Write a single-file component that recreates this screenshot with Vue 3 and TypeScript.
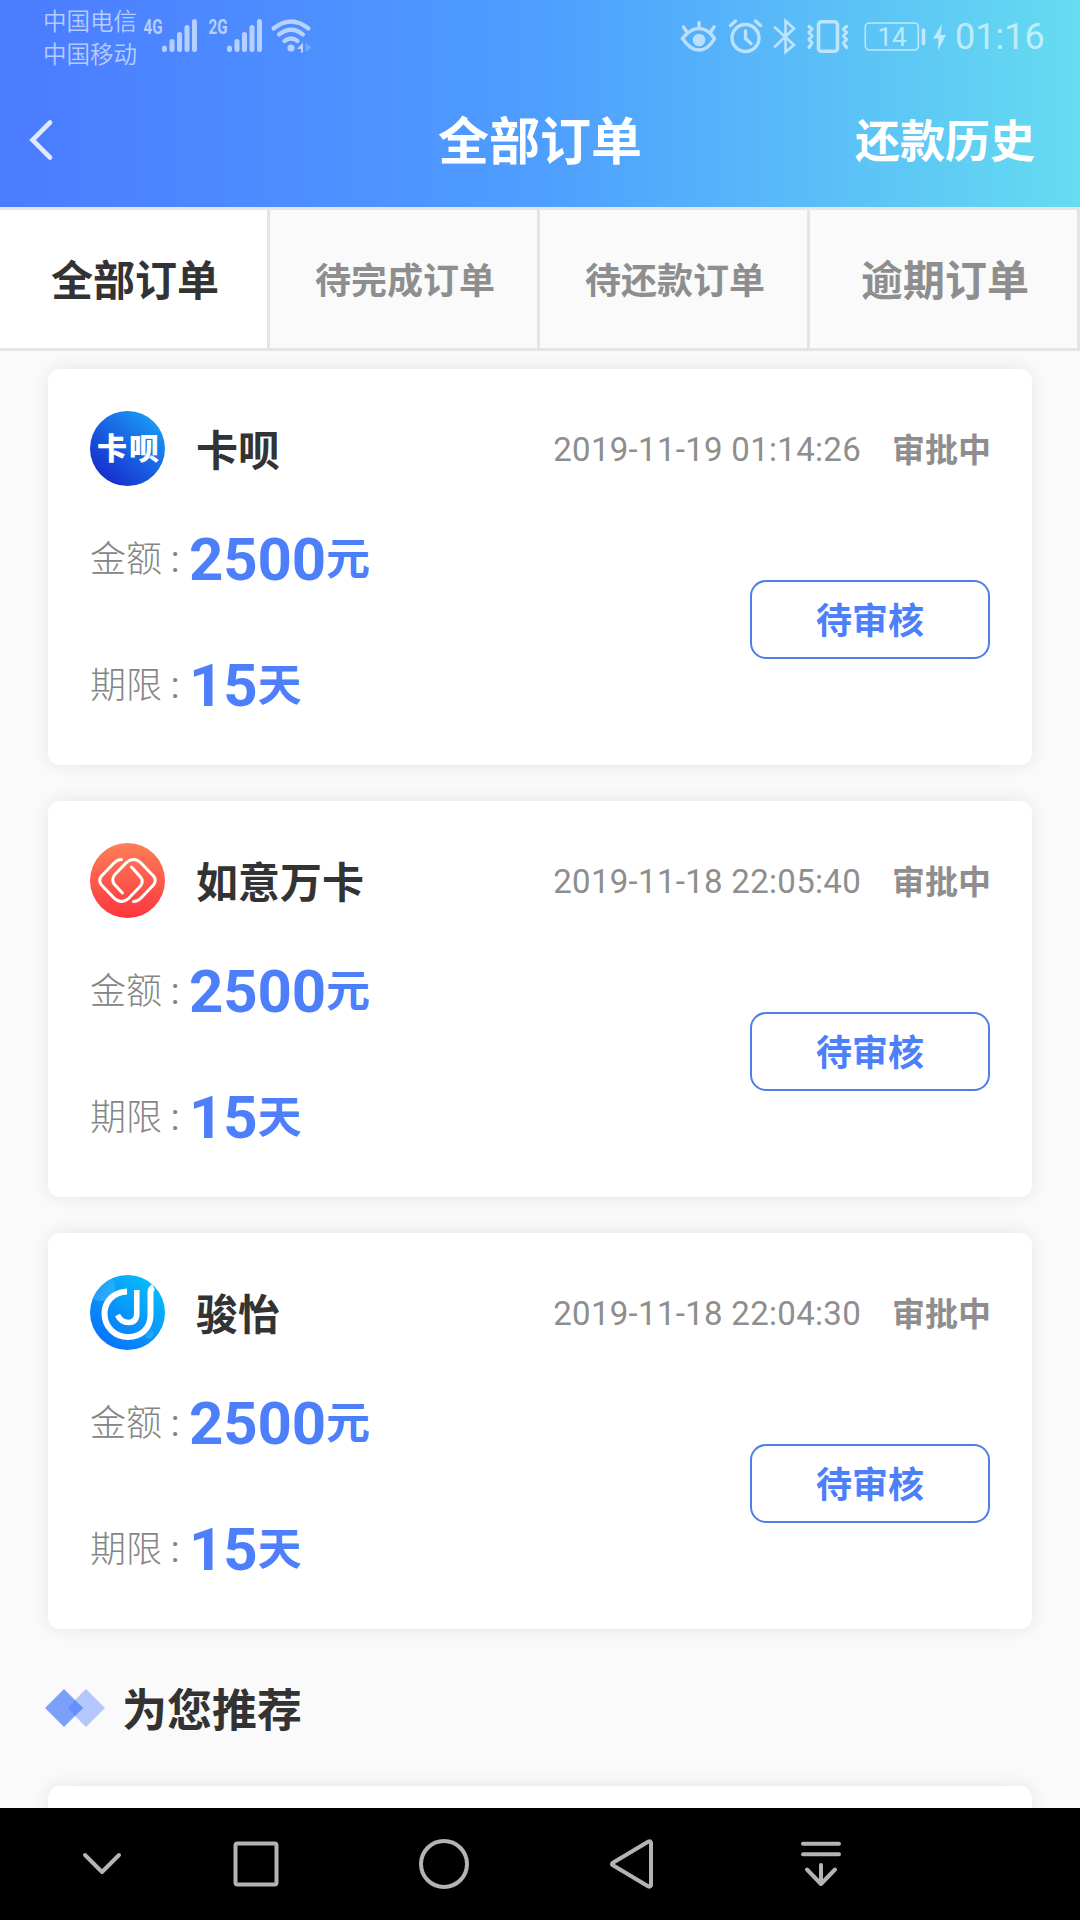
<script setup lang="ts">
interface Order {
  name: string
  logo: 'kabei' | 'ruyi' | 'junyi'
  time: string
  amount: number
  days: number
}

const tabs = [
  { label: '全部订单', active: true, small: false },
  { label: '待完成订单', active: false, small: true },
  { label: '待还款订单', active: false, small: true },
  { label: '逾期订单', active: false, small: false },
]

const orders: Order[] = [
  { name: '卡呗', logo: 'kabei', time: '2019-11-19 01:14:26', amount: 2500, days: 15 },
  { name: '如意万卡', logo: 'ruyi', time: '2019-11-18 22:05:40', amount: 2500, days: 15 },
  { name: '骏怡', logo: 'junyi', time: '2019-11-18 22:04:30', amount: 2500, days: 15 },
]

const networks = ['4G', '2G']
</script>

<template>
  <div class="screen">
    <header class="header">
      <div class="status-bar">
        <div class="carriers">
          <span>中国电信</span>
          <span>中国移动</span>
        </div>
        <svg v-for="net in networks" :key="net" class="signal" width="65" height="72" viewBox="143 0 65 72">
          <text x="143.6" y="34" textLength="19" lengthAdjust="spacingAndGlyphs">{{ net }}</text>
          <g stroke-width="5" stroke-linecap="round">
            <path d="M164.5 48v1.5M172 41.5v8M179.5 34.500v15M187 27.500v22M194.500 21.500v28" />
          </g>
        </svg>
        <svg class="wifi" width="44" height="72" viewBox="269 0 44 72">
          <g fill="none" stroke-width="4.200" stroke-linecap="round">
            <path d="M273.500 28.500Q291 14.500 308.500 28.500M279 34.500Q291 25 303 34.500M284.500 41Q291 36 297.500 41" />
          </g>
          <circle class="solid" cx="291" cy="48" r="3.600" />
          <path class="solid" d="M297 49l6-6.500v10h-2v-3.500z" />
          <path class="faint" d="M305.500 43v9l6-4.500z" />
        </svg>
        <div class="status-right">
          <svg width="40" height="72" viewBox="679 0 40 72">
            <g fill="none" stroke-width="3.400" stroke-linecap="round">
              <path d="M682.500 38.500Q690 28.500 699 28.500T714.500 38.500Q708 50 699 50T682.500 38.500ZM699 22.500v6M683.500 27l3.500 5M714 27l-3.500 5" />
            </g>
            <circle class="solid" cx="699" cy="40" r="6.300" />
          </svg>
          <svg width="52" height="72" viewBox="719 0 52 72">
            <g fill="none" stroke-width="3.400" stroke-linecap="round" stroke-linejoin="round">
              <circle cx="745.500" cy="38" r="13.500" />
              <path d="M730.500 25.500l5-4.500M760.500 25.500l-5-4.500M745.500 31v7.500l5.500 5" />
            </g>
          </svg>
          <svg width="30" height="72" viewBox="771 0 30 72">
            <path fill="none" stroke-width="2.600" stroke-linecap="round" d="M775 27.500l19 17.500-8.500 7v-31l8.500 7.500L775 46.500" />
          </svg>
          <svg width="56" height="72" viewBox="801 0 56 72">
            <g fill="none" stroke-linecap="round" stroke-linejoin="round">
              <rect x="818.500" y="21.800" width="19" height="29.500" rx="3" stroke-width="3.600" />
              <path stroke-width="3.200" d="M809 26.500l3 2.500-3 3.500 3 3.500-3 3.500 3 3.500-3 4.500M846.500 26.500l-3 2.500 3 3.500-3 3.500 3 3.500-3 3.500 3 4.500" />
            </g>
          </svg>
          <svg class="battery" width="93" height="72" viewBox="857 0 93 72">
            <rect x="865.300" y="23" width="53" height="27" rx="4" fill="none" stroke-width="1.600" />
            <text x="877.500" y="45.500">14</text>
            <path fill="none" stroke-width="3.600" stroke-linecap="round" d="M923.500 30v13.500" />
            <path class="solid" d="M942 24l-9 14.500h5.500l-.5 12 8-15.500h-5.500z" />
          </svg>
          <span class="clock">01:16</span>
        </div>
      </div>
      <div class="nav-bar">
        <svg class="back" width="30" height="44" viewBox="0 0 30 44">
          <path d="M23 4.500L5.500 22l17.500 17.500" fill="none" stroke="#dfe8ff" stroke-width="4.600" stroke-linecap="round" />
        </svg>
        <h1>全部订单</h1>
        <span class="history">还款历史</span>
      </div>
    </header>

    <nav class="tabs">
      <div v-for="tab in tabs" :key="tab.label" class="tab" :class="{ active: tab.active, small: tab.small }">
        {{ tab.label }}
      </div>
    </nav>

    <main class="content">
      <section v-for="order in orders" :key="order.name" class="card">
        <div class="card-head">
          <svg v-if="order.logo === 'kabei'" class="logo" viewBox="0 0 75 75">
            <defs>
              <linearGradient id="kabei-bg" x1="0.900" y1="0.150" x2="0.250" y2="0.900">
                <stop offset="0" stop-color="#1a98f5" />
                <stop offset="0.550" stop-color="#195fe2" />
                <stop offset="1" stop-color="#1832cf" />
              </linearGradient>
            </defs>
            <circle cx="37.500" cy="37.500" r="37.500" fill="url(#kabei-bg)" />
            <text class="logo-text" x="7" y="48" textLength="62">卡呗</text>
          </svg>
          <svg v-else-if="order.logo === 'ruyi'" class="logo" viewBox="0 0 75 75">
            <defs>
              <linearGradient id="ruyi-bg" x1="0" y1="0" x2="0" y2="1">
                <stop offset="0" stop-color="#fd7f58" />
                <stop offset="1" stop-color="#fd3540" />
              </linearGradient>
            </defs>
            <circle cx="37.500" cy="37.500" r="37.500" fill="url(#ruyi-bg)" />
            <g fill="none" stroke="#fff" stroke-width="3" stroke-linecap="round" stroke-linejoin="round">
              <path d="M31.500 16.500Q27.500 16.500 24 20L11.500 33Q8 37.500 11.500 42L24 55Q31.500 62 39 55L50.500 43Q54 38.500 50.500 34L41.500 24" />
              <path d="M43.500 58.500Q47.500 58.500 51 55L63.500 42Q67 37.500 63.500 33L51 20Q43.500 13 36 20L24.500 32Q21 37 24.500 41.500L32.500 50" />
            </g>
          </svg>
          <svg v-else class="logo" viewBox="0 0 75 75">
            <defs>
              <linearGradient id="junyi-bg" x1="0.850" y1="0.150" x2="0.250" y2="0.900">
                <stop offset="0" stop-color="#08b9fb" />
                <stop offset="1" stop-color="#0877fa" />
              </linearGradient>
              <linearGradient id="junyi-glow" x1="0" y1="0" x2="0.700" y2="1">
                <stop offset="0" stop-color="#5fc4fb" stop-opacity="0" />
                <stop offset="1" stop-color="#5fc4fb" stop-opacity="0.450" />
              </linearGradient>
              <clipPath id="junyi-clip"><circle cx="37.500" cy="37.500" r="37.500" /></clipPath>
            </defs>
            <g clip-path="url(#junyi-clip)">
              <rect width="75" height="75" fill="url(#junyi-bg)" />
              <circle cx="11" cy="12" r="14" fill="url(#junyi-glow)" />
              <circle cx="59" cy="59" r="4.500" fill="url(#junyi-glow)" />
            </g>
            <g fill="none" stroke="#fff">
              <path d="M37 16.500C23 17 14.500 27 14.500 38.500C14.500 52 25 62 38 62C51.500 62 60.500 53 60.500 40V18Q60.500 13.500 63.500 12" stroke-width="6" />
              <path d="M46.800 15V38Q46.800 47.500 38.500 47.500Q31 47.500 27.500 40" stroke-width="5.600" />
            </g>
          </svg>
          <span class="name">{{ order.name }}</span>
          <span class="time">{{ order.time }}</span>
          <span class="state">审批中</span>
        </div>
        <div class="card-body">
          <div class="facts">
            <div class="fact">
              <span class="label">金额 <i>:</i></span><span class="num">{{ order.amount }}</span><span class="unit">元</span>
            </div>
            <div class="fact">
              <span class="label">期限 <i>:</i></span><span class="num">{{ order.days }}</span><span class="unit">天</span>
            </div>
          </div>
          <button class="action">待审核</button>
        </div>
      </section>

      <div class="recommend">
        <svg width="60" height="38" viewBox="0 0 60 38">
          <path d="M41 0l19 19-19 19-19-19z" fill="#b3c7fd" />
          <path d="M19 0l19 19-19 19L0 19z" fill="#7c9ffc" />
          <path d="M30 11l8 8-8 8-7-8z" fill="#6690fc" />
        </svg>
        <h2>为您推荐</h2>
      </div>
      <section class="card next"></section>
    </main>

    <footer class="system-nav">
      <svg width="1080" height="112" viewBox="0 1808 1080 112">
        <g fill="none" stroke="#b4b4b4" stroke-width="4" stroke-linecap="round" stroke-linejoin="round">
          <path d="M85 1855l17 17 17-17" />
          <rect x="235.500" y="1843.500" width="41" height="41" rx="2" />
          <circle cx="444" cy="1864" r="23" />
          <path d="M648.500 1841.500a2 2 0 0 1 2.500 1v43a2 2 0 0 1-2.500 1L612.500 1865a1.500 1.500 0 0 1 0-2z" />
          <path d="M803 1843.700h36M803 1854.300h36M821 1865v19M807 1869.500l14 14.500 14-14.500" />
        </g>
      </svg>
    </footer>
  </div>
</template>

<style>
body {
  margin: 0;
  overflow: hidden;
}
</style>

<style scoped>
.screen {
  width: 1080px;
  height: 1920px;
  display: flex;
  flex-direction: column;
  overflow: hidden;
  background: #fafafa;
  color: #333;
  font-family: Roboto, "Noto Sans CJK SC", sans-serif;
}

.header {
  height: 207px;
  flex: none;
  background: linear-gradient(90deg, #4b7bff 0%, #4e9eff 50%, #65dcf0 100%);
}

.status-bar {
  height: 72px;
  display: flex;
  color: rgba(255, 255, 255, 0.6);
}

.status-bar svg {
  display: block;
  flex: none;
  stroke: rgba(255, 255, 255, 0.6);
  fill: rgba(255, 255, 255, 0.6);
}

.status-bar text {
  stroke: none;
}

.status-bar .solid {
  stroke: none;
}

.status-bar .faint {
  stroke: none;
  opacity: 0.4;
}

.carriers {
  width: 100px;
  padding: 6px 0 0 43px;
  display: flex;
  flex-direction: column;
  font-size: 23.500px;
  font-weight: 350;
  line-height: 33px;
  white-space: nowrap;
}

.signal text {
  font-size: 21px;
  font-weight: 700;
}

.wifi {
  margin-left: -4px;
}

.status-right {
  display: flex;
  margin-left: auto;
  width: 401px;
}

.battery text {
  font-size: 26px;
  font-weight: 400;
}

.clock {
  margin-left: 5px;
  font-size: 36px;
  line-height: 75px;
}

.nav-bar {
  height: 135px;
  display: grid;
  grid-template-columns: 1fr auto 1fr;
  align-items: center;
  color: #fff;
}

.back {
  display: block;
  margin-left: 27px;
}

h1 {
  margin: 0;
  padding-top: 6px;
  font-size: 51px;
  font-weight: 700;
  line-height: 60px;
}

.history {
  justify-self: end;
  margin-right: 45px;
  padding-top: 7px;
  font-size: 45px;
  font-weight: 700;
  line-height: 60px;
}

.tabs {
  height: 138px;
  flex: none;
  display: flex;
  border-top: 3px solid #e4e6ea;
  border-bottom: 3px solid #e4e4e4;
}

.tab {
  box-sizing: border-box;
  width: 270px;
  height: 138px;
  padding-left: 3px;
  border-right: 3px solid #e4e4e4;
  text-align: center;
  font-size: 42px;
  font-weight: 700;
  line-height: 143px;
  color: #8e8e8e;
}

.tab.small {
  font-size: 36px;
  line-height: 144px;
}

.tab.active {
  background: #fff;
  color: #333;
}

.content {
  flex: 1;
  min-height: 0;
  overflow: hidden;
  padding: 18px 48px 0;
  display: flex;
  flex-direction: column;
}

.card {
  box-sizing: border-box;
  height: 396px;
  flex: none;
  margin-bottom: 36px;
  padding: 42px 42px 0;
  border-radius: 12px;
  background: #fff;
  box-shadow: 0 0 18px rgba(0, 0, 0, 0.09);
}

.card-head {
  height: 75px;
  display: flex;
  align-items: center;
}

.logo {
  width: 75px;
  height: 75px;
  flex: none;
}

.logo-text {
  font-size: 30px;
  font-weight: 900;
  fill: #fff;
}

.name {
  margin-left: 31px;
  padding-bottom: 2px;
  font-size: 42px;
  font-weight: 700;
}

.time {
  margin-left: auto;
  padding-top: 2px;
  font-size: 33px;
  letter-spacing: 0.3px;
  color: #8e8e8e;
}

.state {
  margin: 0 -1px 0 31px;
  padding-bottom: 2px;
  font-size: 33px;
  font-weight: 700;
  color: #8e8e8e;
}

.card-body {
  display: flex;
  justify-content: space-between;
}

.fact {
  display: flex;
  align-items: baseline;
  height: 126px;
  line-height: 147px;
  color: #4e7ffa;
}

.label {
  position: relative;
  top: -8px;
  width: 99px;
  font-size: 36px;
  font-weight: 300;
  color: #858585;
}

.label i {
  font-style: normal;
  font-weight: 400;
}

.num {
  font-size: 60px;
  font-weight: 700;
  letter-spacing: -0.2px;
}

.unit {
  position: relative;
  top: -5px;
  font-size: 44px;
  font-weight: 700;
}

.action {
  box-sizing: border-box;
  width: 240px;
  height: 79px;
  margin-top: 94px;
  padding: 6px 0 0;
  border: 2px solid #4e7ee6;
  border-radius: 16px;
  background: #fff;
  font: 700 36px/69px Roboto, "Noto Sans CJK SC", sans-serif;
  color: #4e7ffa;
}

.recommend {
  height: 85px;
  flex: none;
  display: flex;
  align-items: center;
  margin: 0 0 36px -3px;
}

h2 {
  margin: 0 0 0 17px;
  font-size: 45px;
  font-weight: 700;
}

.system-nav {
  height: 112px;
  flex: none;
  background: #000;
}

.system-nav svg {
  display: block;
}
</style>
